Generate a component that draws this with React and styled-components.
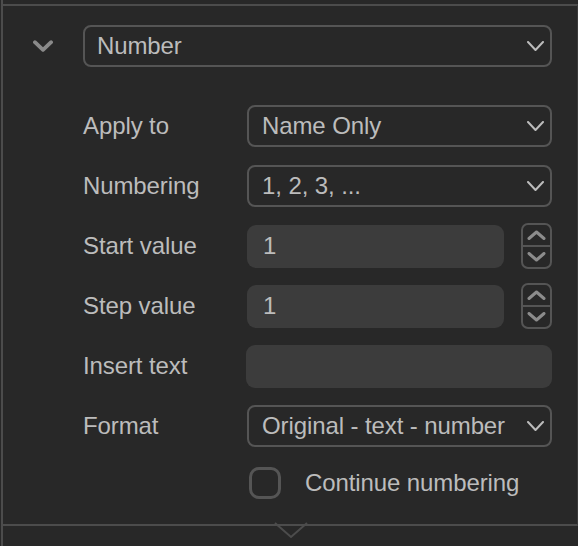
import React from "react";
import styled, { createGlobalStyle } from "styled-components";

const Global = createGlobalStyle`
  html, body { margin: 0; padding: 0; background: #282828; }
  body { font-family: "Liberation Sans", Arial, sans-serif; }
  * { box-sizing: border-box; }
`;

const Frame = styled.div`
  width: 578px;
  height: 546px;
  margin: 0;
  padding-left: 1px;
  background: #282828;
  overflow: hidden;
`;

const Edge = styled.div`
  height: 546px;
  border-left: 2px solid #4c4c4c;
  padding-top: 4px;
`;

const Panel = styled.div`
  position: relative;
  height: 522px;
  border-top: 2px solid #4c4c4c;
  border-bottom: 2px solid #4c4c4c;
  border-right: 1px solid #3a3a3a;
  padding: 19px 25px 0 0;
  display: flex;
  flex-direction: column;
`;

const Header = styled.div`
  display: flex;
  align-items: center;
  gap: 30px;
  padding-left: 30px;
  margin-bottom: 38px;
`;

const Collapse = styled.button`
  width: 20px;
  height: 42px;
  padding: 0;
  border: 0;
  background: transparent;
  display: flex;
  align-items: center;
  justify-content: center;
  color: #8a8a8a;
`;

const Rows = styled.div`
  display: flex;
  flex-direction: column;
  gap: 18px;
  padding-left: 80px;
`;

const Row = styled.div`
  display: grid;
  grid-template-columns: 164px 1fr;
  grid-template-rows: 42px;
  align-items: center;
  height: 42px;
`;

const Label = styled.span`
  font-size: 24px;
  color: #bcbcbc;
  line-height: 1;
  letter-spacing: -0.1px;
`;

const Select = styled.button`
  width: 100%;
  flex: ${(p) => (p.$grow ? 1 : "initial")};
  height: 42px;
  display: flex;
  align-items: center;
  justify-content: space-between;
  padding: 0 6px 0 ${(p) => p.$pad || 14}px;
  background: transparent;
  border: 2px solid #555555;
  border-radius: 8px;
  color: #bcbcbc;
  font-family: "Liberation Sans", Arial, sans-serif;
  font-size: 24px;
  letter-spacing: -0.1px;
  text-align: left;
`;

const StepWrap = styled.div`
  display: flex;
  align-items: center;
  gap: 17px;
  height: 42px;
`;

const Field = styled.div`
  flex: 1;
  height: 43px;
  margin-left: ${(p) => p.$shift || 0}px;
  background: #3c3c3c;
  border-radius: 9px;
  display: flex;
  align-items: center;
  padding-left: 16px;
  color: #bcbcbc;
  font-size: 24px;
`;

const Stepper = styled.div`
  width: 31px;
  height: 46px;
  margin: -2px 0 -2px 0;
  border: 2px solid #555555;
  border-radius: 7px;
  display: flex;
  flex-direction: column;
  color: #8c8c8c;
`;

const StepHalf = styled.div`
  flex: 1;
  display: flex;
  align-items: center;
  justify-content: center;
  border-top: ${(p) => (p.$lower ? "2px solid #555555" : "0")};
`;

const CheckRow = styled.label`
  display: flex;
  align-items: center;
  gap: 24px;
  margin-top: 20px;
  padding-left: 246px;
  height: 32px;
`;

const Box = styled.span`
  width: 32px;
  height: 32px;
  border: 3px solid #555555;
  border-radius: 10px;
`;

const CheckText = styled.span`
  font-size: 24px;
  color: #bcbcbc;
  letter-spacing: -0.1px;
`;

const Notch = styled.svg`
  position: absolute;
  left: 268px;
  bottom: -16px;
`;

const Chevron = ({ w = 17, h = 10, sw = 2, color = "#bcbcbc" }) => (
  <svg width={w} height={h} viewBox={`0 0 ${w} ${h}`} fill="none">
    <path
      d={`M${sw / 2} ${sw / 2} L${w / 2} ${h - sw / 2} L${w - sw / 2} ${sw / 2}`}
      stroke={color}
      strokeWidth={sw}
      strokeLinecap="round"
      strokeLinejoin="round"
    />
  </svg>
);

const Up = () => (
  <svg width="19" height="10" viewBox="0 0 19 10" fill="none">
    <path d="M2 8.5 L9.5 2 L17 8.5" stroke="#8c8c8c" strokeWidth="3" strokeLinecap="round" strokeLinejoin="round" />
  </svg>
);

const Down = () => (
  <svg width="19" height="10" viewBox="0 0 19 10" fill="none">
    <path d="M2 1.5 L9.5 8 L17 1.5" stroke="#8c8c8c" strokeWidth="3" strokeLinecap="round" strokeLinejoin="round" />
  </svg>
);

const SelectRow = ({ label, value }) => (
  <Row>
    <Label>{label}</Label>
    <Select $pad={13}>
      <span>{value}</span>
      <Chevron />
    </Select>
  </Row>
);

const StepRow = ({ label, value }) => (
  <Row>
    <Label>{label}</Label>
    <StepWrap>
      <Field>{value}</Field>
      <Stepper>
        <StepHalf>
          <Up />
        </StepHalf>
        <StepHalf $lower>
          <Down />
        </StepHalf>
      </Stepper>
    </StepWrap>
  </Row>
);

export default function App() {
  return (
    <>
      <Global />
      <Frame>
        <Edge>
          <Panel>
            <Header>
              <Collapse>
                <Chevron w={21} h={12} sw={4} color="#8a8a8a" />
              </Collapse>
              <Select $grow $pad={12}>
                <span>Number</span>
                <Chevron />
              </Select>
            </Header>
            <Rows>
              <SelectRow label="Apply to" value="Name Only" />
              <SelectRow label="Numbering" value="1, 2, 3, ..." />
              <StepRow label="Start value" value="1" />
              <StepRow label="Step value" value="1" />
              <Row>
                <Label>Insert text</Label>
                <Field $shift={-1} />
              </Row>
              <SelectRow label="Format" value="Original - text - number" />
            </Rows>
            <CheckRow>
              <Box />
              <CheckText>Continue numbering</CheckText>
            </CheckRow>
            <Notch width="40" height="18" viewBox="0 0 40 18">
              <rect x="0" y="0" width="40" height="2" fill="#282828" />
              <path d="M4 1 L20 15 L36 1" stroke="#4c4c4c" strokeWidth="2" fill="none" />
            </Notch>
          </Panel>
        </Edge>
      </Frame>
    </>
  );
}
